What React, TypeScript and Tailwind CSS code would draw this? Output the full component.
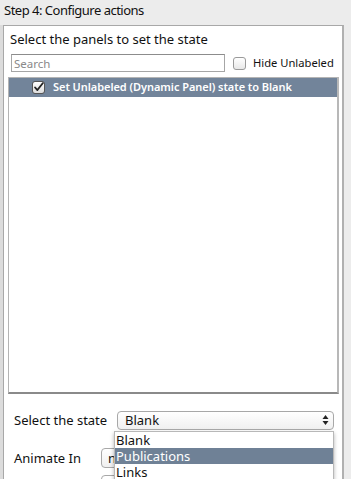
import React from "react";

const font = { fontFamily: '"Noto Sans", "Liberation Sans", sans-serif' };

export default function App() {
  return (
    <div
      className="relative w-[351px] h-[479px] overflow-hidden bg-[#ececec] text-[#111] whitespace-nowrap"
      style={font}
    >
      <div className="h-[25px] pl-[4px] pt-[1px] text-[13px] leading-[18px] tracking-[-0.5px]">
        Step 4: Configure actions
      </div>
      <div className="flex">
        <div className="w-[3px] bg-[#dcdcdc]" />
        <div className="w-[341px] h-[470px] border-l border-t border-[#a8a8a8] border-r-2 border-r-[#b0b0b0] bg-white flex flex-col">
          <div className="pl-[6px] pt-[4px] h-[26px] text-[13px] leading-[18px]">
            Select the panels to set the state
          </div>
          <div className="flex items-center h-[23px]">
            <div className="ml-[7px] w-[214px] h-[18px] border border-[#a6a6a6] border-t-[#8c8c8c] flex items-center pl-[2px] text-[11.5px] text-[#8a8a8a]">
              Search
            </div>
            <div className="ml-[8px] w-[13px] h-[13px] rounded-[3px] border border-[#9a9a9a] bg-gradient-to-b from-white to-[#e8e8e8]" />
            <div className="ml-[7px] text-[11.2px]">Hide Unlabeled</div>
          </div>
          <div className="ml-[4px] mt-[2px] w-[331px] h-[321px] border border-[#b4b4b4] border-b-2 border-b-[#8a8a8a] border-r-2 border-r-[#b8b8b8] bg-white">
            <div className="h-[19px] bg-[#72849a] flex items-center">
              <div className="ml-[23px] w-[13px] h-[13px] rounded-[3px] border border-[#555] bg-gradient-to-b from-white to-[#dcdcdc] flex items-center justify-center">
                <svg width="13" height="13" viewBox="0 0 13 13">
                  <path d="M2.5 6.5 L5.2 9.5 L11.5 1.5" fill="none" stroke="#222" strokeWidth="2.2" strokeLinecap="round" strokeLinejoin="round" />
                </svg>
              </div>
              <div className="ml-[8px] text-[11px] text-white font-semibold tracking-[-0.05px]">
                Set Unlabeled (Dynamic Panel) state to Blank
              </div>
            </div>
          </div>
          <div className="flex items-center mt-[15px] h-[22px]">
            <div className="pl-[10px] w-[113px] text-[13px]">Select the state</div>
            <div className="w-[217px] h-[19px] rounded-[4px] border border-[#a8a8a8] bg-gradient-to-b from-white to-[#f0f0f0] flex items-center justify-between pl-[7px] pr-[4px] text-[13px]">
              <span>Blank</span>
              <svg width="7" height="12" viewBox="0 0 7 12">
                <path d="M3.5 1 L6.5 5 L0.5 5 Z" fill="#222" />
                <path d="M3.5 11 L6.5 7 L0.5 7 Z" fill="#222" />
              </svg>
            </div>
          </div>
          <div className="flex items-center mt-[17px] h-[20px]">
            <div className="pl-[10px] w-[97px] text-[13px] pt-[2px]">Animate In</div>
            <div className="w-[100px] h-[20px] rounded-[4px] border border-[#a8a8a8] bg-gradient-to-b from-white to-[#f0f0f0] pl-[6px] text-[13px] leading-[18px]">
              n
            </div>
          </div>
          <div className="ml-[97px] mt-[7px] w-[100px] h-[20px] rounded-[4px] border border-[#a8a8a8] bg-white" />
        </div>
      </div>
      <div className="absolute left-[114px] top-[431px] w-[220px] h-[60px] bg-white border border-[#b8b8b8] shadow-[0_2px_4px_rgba(0,0,0,0.3)] text-[13px] leading-[16px]">
        <div className="pl-[1px] h-[16px]">Blank</div>
        <div className="pl-[1px] h-[16px] bg-[#6f8196] text-white">Publications</div>
        <div className="pl-[1px] h-[16px]">Links</div>
      </div>
    </div>
  );
}
